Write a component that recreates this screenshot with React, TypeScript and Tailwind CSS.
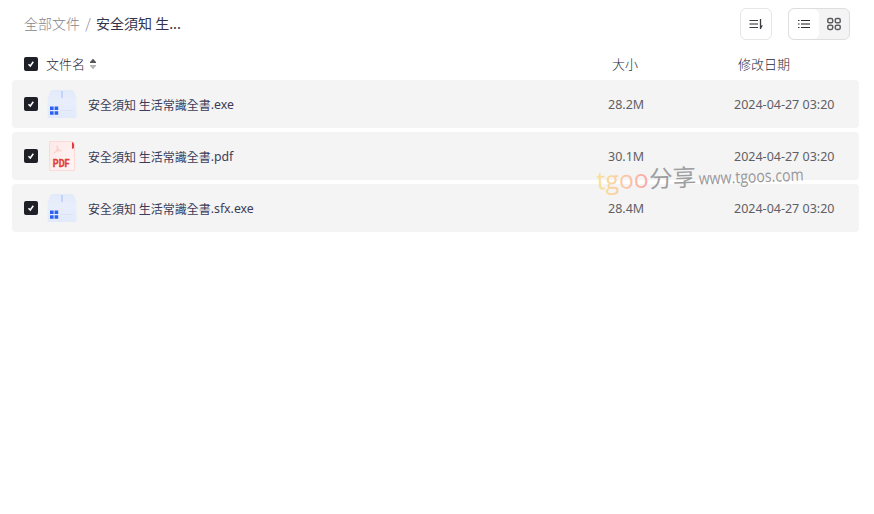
import React from 'react';

type FileKind = 'exe' | 'pdf';

interface FileItem {
  name: string;
  ext: string;
  kind: FileKind;
  size: string;
  date: string;
}

const files: FileItem[] = [
  { name: '安全須知 生活常識全書', ext: '.exe', kind: 'exe', size: '28.2M', date: '2024-04-27 03:20' },
  { name: '安全須知 生活常識全書', ext: '.pdf', kind: 'pdf', size: '30.1M', date: '2024-04-27 03:20' },
  { name: '安全須知 生活常識全書', ext: '.sfx.exe', kind: 'exe', size: '28.4M', date: '2024-04-27 03:20' },
];

const Checkbox: React.FC = () => (
  <span className="flex h-3.5 w-3.5 shrink-0 items-center justify-center rounded-[2px] bg-[#1f2027]">
    <svg width="14" height="14" viewBox="0 0 14 14" fill="none">
      <path d="M4.5 7.2L6.3 9L9.3 4.8" stroke="#fff" strokeWidth="1.5" />
    </svg>
  </span>
);

const ExeIcon: React.FC = () => (
  <svg width="30" height="30" viewBox="0 0 30 30" fill="none">
    <defs>
      <linearGradient id="box" x1="0" y1="0" x2="0" y2="1">
        <stop offset="0" stopColor="#e2e9fa" />
        <stop offset="0.4" stopColor="#e9eefb" />
        <stop offset="1" stopColor="#e2eafb" />
      </linearGradient>
    </defs>
    <path d="M5.5 1H24.5Q26.2 1 26.8 2.6L29.5 8.5V28Q29.5 29 28.5 29H1.5Q.5 29 .5 28V8.5L3.2 2.6Q3.8 1 5.5 1Z" fill="url(#box)" />
    <path d="M14 2H16V9H14Z" fill="#c3d4fa" />
    <path d="M14 21.5H27" stroke="#dce3f2" />
    <path d="M3 17.5H6.6V21.1H3ZM7.6 17.5H11.2V21.1H7.6ZM3 22.2H6.6V25.8H3ZM7.6 22.2H11.2V25.8H7.6Z" fill="#2b62f6" />
  </svg>
);

const PdfIcon: React.FC = () => (
  <svg width="30" height="30" viewBox="0 0 30 30" fill="none">
    <defs>
      <linearGradient id="sheet" x1="0" y1="0" x2="1" y2="1">
        <stop offset="0" stopColor="#fde8e7" />
        <stop offset="1" stopColor="#fff5f4" />
      </linearGradient>
    </defs>
    <path d="M2.5 .5H25L27.5 3V29.5H2.5Z" fill="url(#sheet)" stroke="#fbdad8" />
    <path d="M25 1.2H26L27 3V7L25 8Z" fill="#e33b3b" />
    <path d="M10 4.5C11 8 9.5 10.5 7 12M10 4.8C10.2 7.8 12 9.8 14.5 10M7 12C9 9.9 12 9.3 14.5 10" stroke="#f9cfce" strokeWidth="1.2" />
    <text
      x="5.8"
      y="26"
      textLength="16.8"
      lengthAdjust="spacingAndGlyphs"
      fill="#e23c3c"
      stroke="#e23c3c"
      strokeWidth=".3"
      className="font-['Roboto'] text-[10.5px] font-bold"
    >
      PDF
    </text>
  </svg>
);

const SortIcon: React.FC = () => (
  <svg width="14" height="14" viewBox="0 0 14 14" fill="none">
    <path d="M.5 3.5H9M.5 10.5H9" stroke="#3c3c40" />
    <path d="M.5 7H9" stroke="#77777a" strokeWidth="1.6" />
    <path d="M11.5 2V12" stroke="#3c3c40" strokeWidth="1.3" />
    <path d="M11.5 12V8.6H14Z" fill="#3c3c40" />
  </svg>
);

const ListIcon: React.FC = () => (
  <svg width="14" height="14" viewBox="0 0 14 14">
    <path d="M1 3.5H2.5M4 3.5H13M1 10.5H2.5M4 10.5H13" stroke="#2b2b30" />
    <path d="M1 7H2.5M4 7H13" stroke="#8b8b8e" strokeWidth="1.8" />
  </svg>
);

const GridIcon: React.FC = () => (
  <svg width="14" height="14" viewBox="0 0 14 14" fill="none" stroke="#5c5c60" strokeWidth="1.5">
    <rect x=".8" y="1.6" width="4.9" height="4.2" rx="1.4" />
    <rect x="8.3" y="1.6" width="4.9" height="4.2" rx="1.4" />
    <rect x=".8" y="8.2" width="4.9" height="4.2" rx="1.4" />
    <rect x="8.3" y="8.2" width="4.9" height="4.2" rx="1.4" />
  </svg>
);

const Watermark: React.FC = () => (
  <svg className="pointer-events-none absolute left-[590px] top-[140px]" width="230" height="80" viewBox="0 0 230 80">
    <defs>
      <linearGradient id="tgoo" x1="0" y1="0" x2="1" y2="0">
        <stop offset="0" stopColor="#f8e293" />
        <stop offset="0.5" stopColor="#fbcba8" />
        <stop offset="1" stopColor="#fba6a2" />
      </linearGradient>
    </defs>
    <g transform="rotate(-2.2 7 49)">
      <text x="7" y="49.5" textLength="52" lengthAdjust="spacingAndGlyphs" fill="url(#tgoo)" className="font-['Open_Sans'] text-[25px]">
        tgoo
      </text>
      <text x="59.5" y="49.5" textLength="47" fill="#9e9ea1" className="font-['Noto_Sans_CJK_SC'] text-[23.5px]">
        分享
      </text>
      <text x="109" y="48.5" textLength="105" lengthAdjust="spacingAndGlyphs" fill="#98989b" className="font-['Open_Sans'] text-[17px]">
        www.tgoos.com
      </text>
    </g>
  </svg>
);

export default function App() {
  return (
    <div className="relative h-[514px] w-[874px] overflow-hidden bg-white font-['Noto_Sans','Noto_Sans_CJK_SC',sans-serif] text-[#3c3c58]">
      {/* Breadcrumb and view controls */}
      <header className="flex h-12 items-center justify-between pl-6 pr-6">
        <nav className="flex items-center pb-0.5 font-['Noto_Sans_CJK_SC',sans-serif] text-sm leading-5">
          <span className="font-light text-[#85858c]">全部文件</span>
          <span className="w-4 text-center font-light text-[#85858c]">/</span>
          <span className="text-[#33334a]">安全須知 生...</span>
        </nav>
        <div className="flex gap-4">
          <button className="flex h-8 w-8 items-center justify-center rounded-md border border-[#e6e6e6]">
            <SortIcon />
          </button>
          <div className="flex h-8 w-[62px] overflow-hidden rounded-md border border-[#dedede] bg-[#f4f4f4]">
            <button className="flex w-[30px] items-center justify-center rounded-md bg-white">
              <ListIcon />
            </button>
            <button className="flex w-[30px] items-center justify-center">
              <GridIcon />
            </button>
          </div>
        </div>
      </header>

      {/* Column titles */}
      <div className="flex h-8 items-center pl-6 font-['Noto_Sans_CJK_SC',sans-serif] text-[13px] leading-5 font-light text-[#1f1f3c]">
        <Checkbox />
        <div className="ml-2 flex w-[566px] items-center gap-1">
          <span>文件名</span>
          <svg width="8" height="12" viewBox="0 0 8 12">
            <path d="M4 .8L7 4V5H1V4Z" fill="#55555a" />
            <path d="M1 7H7V8L4 11.2L1 8Z" fill="#b4b4b6" />
          </svg>
        </div>
        <span className="w-[126px]">大小</span>
        <span>修改日期</span>
      </div>

      {/* Files */}
      <div className="flex flex-col gap-1 pl-3 pr-[15px]">
        {files.map((file) => (
          <div key={file.name + file.ext} className="flex h-12 items-center rounded bg-[#f4f4f4] pl-3 text-[12.5px]">
            <Checkbox />
            <div className="ml-[9px] mr-[11px] w-[30px] shrink-0">{file.kind === 'pdf' ? <PdfIcon /> : <ExeIcon />}</div>
            <div className="flex w-[520px] items-center pt-px leading-5">
              <span className="font-['Noto_Sans_CJK_TC',sans-serif] text-xs leading-5">{file.name}</span>
              <span className="pt-px text-[12.3px]">{file.ext}</span>
            </div>
            <span className="w-[126px] pt-0.5 text-[#606064]">{file.size}</span>
            <span className="pt-0.5 text-[#606064]">{file.date}</span>
          </div>
        ))}
      </div>

      <Watermark />
    </div>
  );
}
